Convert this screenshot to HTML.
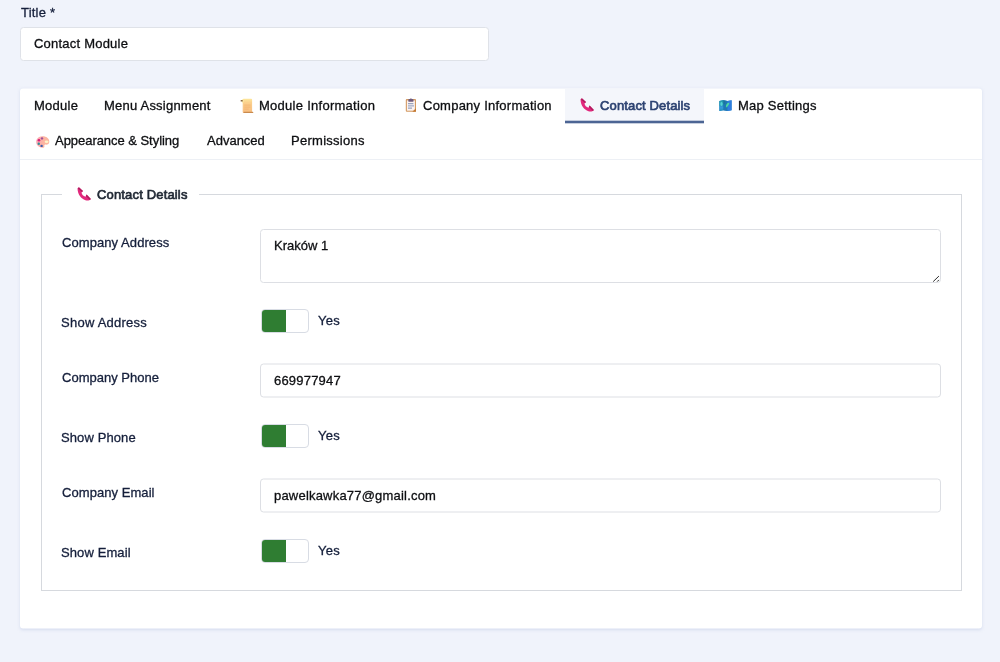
<!DOCTYPE html>
<html><head><meta charset="utf-8">
<style>
*{box-sizing:border-box;margin:0;padding:0}
html,body{width:1000px;height:662px;overflow:hidden}
body{background:#f0f3fb;font-family:"Liberation Sans",sans-serif;font-size:13px;color:#151f3b;position:relative}
.t{position:absolute;white-space:nowrap;line-height:16px;height:16px;will-change:transform;-webkit-text-stroke:.3px currentColor}
.dark{color:#0e0f12}
.inp{position:absolute;background:#fff;border:1px solid #dddfe4;border-radius:3.5px}
.card{position:absolute;left:20px;top:88px;width:962px;height:540px;background:#fff;border-radius:3px;box-shadow:0 1px 3px rgba(190,200,230,.5);transform:translateY(.5px)}
.tabline{position:absolute;left:20px;top:159px;width:962px;height:1px;background:#edf0f5}
.active{position:absolute;left:565px;top:89px;width:139px;height:34px;background:#f4f6fb}
.active i{position:absolute;left:0;top:31px;width:100%;height:3px;background:#4c6594;display:block;transform-origin:0 0;transform:translateY(.7px) scaleY(.87)}
.fs{position:absolute;left:41px;top:194px;width:921px;height:397px;border:1px solid #d6d9de}
.legbg{position:absolute;left:62px;top:184px;width:137px;height:20px;background:#fff}
.sw{position:absolute;width:48px;height:24px;border:1px solid #d8dce4;border-radius:4px;background:#fff;overflow:hidden}
.sw i{display:block;position:absolute;left:-1px;top:-1px;width:25px;height:24px;background:#2f7d32}
svg{position:absolute;overflow:visible}
</style></head><body>
<svg width="0" height="0" style="position:absolute">
<defs>
<g id="phone"><path d="M0.5,1.6 L1.9,0.2 L6,4 L4.5,5.5 C4.9,7.7 6.3,9.1 8.5,9.7 L9.6,7.6 L13.9,12 C12.5,13.5 10.5,13.8 8.5,13.2 C4,12 0.8,7.5 0.5,1.6 Z" fill="#e2287c"/><path d="M0.7,1.5 L1.9,0.2 L6,4 L5,5 Z" fill="#b01d5f"/><path d="M9.6,7.6 L13.9,12 L12.8,12.9 L8.9,9 Z" fill="#b01d5f"/></g>
</defs></svg>

<div class="t" style="left:21px;top:5px;letter-spacing:.2px">Title *</div>
<div class="inp" style="left:20px;top:27px;width:469px;height:34px;border-color:#dfe2e8"></div>
<div class="t dark" style="left:33.7px;top:36px;letter-spacing:.22px">Contact Module</div>

<div class="card"></div>
<div class="active"><i></i></div>
<div class="tabline"></div>

<div class="t dark" style="left:33.9px;top:98px;letter-spacing:.26px">Module</div>
<div class="t dark" style="left:104.2px;top:98px;letter-spacing:.22px">Menu Assignment</div>
<!-- scroll -->
<svg style="left:240px;top:97.5px" width="14" height="16" viewBox="0 0 14 16"><defs><linearGradient id="sg" x1="0" y1="0" x2="0" y2="1"><stop offset="0" stop-color="#fde79c"/><stop offset=".28" stop-color="#fbcf8c"/><stop offset="1" stop-color="#f8bd80"/></linearGradient></defs><rect x="2.7" y="0.8" width="9.4" height="14.2" rx="1" fill="url(#sg)"/><rect x="2" y="1.2" width="1.4" height="3.6" rx=".6" fill="#fdf0a8"/><rect x="0.6" y="1.9" width="2.2" height="1.7" rx=".7" fill="#7c5630" opacity=".9"/><rect x="4.2" y="6.6" width="6.4" height="1" fill="#eea565" opacity=".55"/><rect x="4.2" y="8.6" width="6.4" height="1" fill="#eea565" opacity=".55"/><rect x="4.2" y="10.6" width="4.4" height="1" fill="#eea565" opacity=".45"/><rect x="3.5" y="13.8" width="9.8" height="1.3" rx=".6" fill="#c98a4e"/></svg>
<div class="t dark" style="left:259px;top:98px;letter-spacing:.27px">Module Information</div>
<!-- clipboard -->
<svg style="left:405px;top:98px" width="12" height="14" viewBox="0 0 12 14"><rect x="0.8" y="1" width="10.2" height="12.8" rx="1" fill="#d39a62"/><rect x="1.9" y="2.4" width="8" height="10.3" fill="#fbf2f0"/><rect x="3.3" y="1" width="5.2" height="2.8" rx=".9" fill="#6f5c7e"/><rect x="4.9" y="0.4" width="2" height="1.4" rx=".7" fill="#6f5c7e"/><rect x="3" y="5.2" width="5.4" height="1" fill="#7f90b4"/><rect x="3" y="7.4" width="6" height="1" fill="#8a9bc0"/><rect x="3" y="9.6" width="4" height="1" fill="#7f90b4"/><path d="M11,10.3 L11,13.8 L7.3,13.8 Z" fill="#c47a34"/></svg>
<div class="t dark" style="left:422.8px;top:98px;letter-spacing:.24px">Company Information</div>
<svg style="left:580px;top:98px" width="14" height="14" viewBox="0 0 14 14"><use href="#phone"/></svg>
<div class="t" style="left:599.6px;top:98px;color:#2c4271;letter-spacing:.14px;-webkit-text-stroke:.65px currentColor">Contact Details</div>
<!-- map -->
<svg style="left:719px;top:100px" width="13" height="11" viewBox="0 0 13 11"><path d="M0.4,0.9 L4.3,0.2 L8.5,0.9 L12.6,0.2 L12.6,10.2 L8.5,10.9 L4.3,10.2 L0.4,10.9 Z" fill="#2580c4"/><path d="M0.4,0.9 L4.5,0.2 L4.5,10.2 L0.4,10.9 Z" fill="#2a93c4"/><path d="M4.3,0.2 L8.7,0.9 L8.7,10.9 L4.3,10.2 Z" fill="#1f78b4"/><path d="M3.4,0.4 L6.5,0.6 L6,4 L3.6,4.4 Z" fill="#176f8e" opacity=".55"/><path d="M8.5,0.9 L12.6,0.2 L12.6,10.2 L8.5,10.9 Z" fill="#2f7ee0"/><path d="M0.4,0.9 L4.3,0.2 L4.3,5 L0.4,6 Z" fill="#23a0a8" opacity=".7"/><ellipse cx="2.5" cy="4" rx="1.2" ry="2.1" fill="#5ad8dc" opacity=".9"/><path d="M6.9,6.2 C7.2,3.8 9,2.6 10.4,2.8 C10.2,4.6 8.9,6 7.4,7.6 Z" fill="#4fe09a" opacity=".95"/><rect x="0.4" y="6.5" width="3.9" height="2.2" fill="#3f9df0" opacity=".5"/></svg>
<div class="t dark" style="left:738.1px;top:98px;letter-spacing:.24px">Map Settings</div>
<!-- palette -->
<svg style="left:36px;top:135.5px" width="14" height="12" viewBox="0 0 14 12"><defs><linearGradient id="pg" x1="0" y1="0" x2="1" y2="0"><stop offset="0" stop-color="#fba6b2"/><stop offset=".5" stop-color="#fcb3a2"/><stop offset="1" stop-color="#fcb89e"/></linearGradient></defs><path d="M6.2,0.3 C10,0.1 13.2,2.3 13.3,5.4 C13.4,8 11.6,8.8 9.6,8.6 C8.4,8.5 8.2,9.6 8.4,10.4 C8.6,11.4 7.4,11.9 6,11.7 C2.6,11.3 0.2,9 0.2,6 C0.2,2.8 2.8,0.5 6.2,0.3 Z" fill="url(#pg)"/><ellipse cx="10.6" cy="5.7" rx="1.9" ry="1.3" fill="#fff3c8"/><circle cx="3" cy="4.2" r="1.3" fill="#d81b7a"/><circle cx="6" cy="2.4" r="1.2" fill="#a0509a"/><circle cx="2.8" cy="7.8" r="1.2" fill="#2f8f9a"/><circle cx="5.6" cy="9.9" r="1.2" fill="#3f5fae"/></svg>
<div class="t dark" style="left:55.3px;top:133px;letter-spacing:-.04px">Appearance &amp; Styling</div>
<div class="t dark" style="left:207px;top:133px">Advanced</div>
<div class="t dark" style="left:291px;top:133px;letter-spacing:.27px">Permissions</div>

<div class="fs"></div>
<div class="legbg"></div>
<svg style="left:77px;top:187px" width="14" height="14" viewBox="0 0 14 14"><use href="#phone"/></svg>
<div class="t" style="left:96.9px;top:187px;color:#1f2733;letter-spacing:.16px;-webkit-text-stroke:.65px currentColor">Contact Details</div>

<div class="t" style="left:61.5px;top:235px;letter-spacing:.07px">Company Address</div>
<div class="inp" style="left:260px;top:229px;width:681px;height:54px"></div>
<svg style="left:932px;top:275px" width="8" height="8" viewBox="0 0 8 8"><path d="M1.2,6.6 L6.9,1.1 M5.2,6.6 L6.9,4.9" stroke="#2a2a2a" stroke-width="1" fill="none"/></svg>
<div class="t dark" style="left:273.5px;top:238px">Kraków 1</div>

<div class="t" style="left:61px;top:315px;letter-spacing:.25px">Show Address</div>
<div class="sw" style="left:261px;top:309px"><i></i></div>
<div class="t" style="left:317.5px;top:313px;letter-spacing:.3px">Yes</div>

<div class="t" style="left:61.5px;top:370px;letter-spacing:.01px">Company Phone</div>
<div class="inp" style="left:260px;top:363px;width:681px;height:34px;transform:translateY(.5px)"></div>
<div class="t dark" style="left:273.7px;top:373px;letter-spacing:.2px">669977947</div>

<div class="t" style="left:61px;top:430px;letter-spacing:.1px">Show Phone</div>
<div class="sw" style="left:261px;top:424px"><i></i></div>
<div class="t" style="left:317.5px;top:428px;letter-spacing:.3px">Yes</div>

<div class="t" style="left:61.5px;top:485px;letter-spacing:.06px">Company Email</div>
<div class="inp" style="left:260px;top:478px;width:681px;height:34px;transform:translateY(.5px)"></div>
<div class="t dark" style="left:273.5px;top:488px;letter-spacing:.2px">pawelkawka77@gmail.com</div>

<div class="t" style="left:61px;top:545px;letter-spacing:.1px">Show Email</div>
<div class="sw" style="left:261px;top:539px"><i></i></div>
<div class="t" style="left:317.5px;top:543px;letter-spacing:.3px">Yes</div>
</body></html>
